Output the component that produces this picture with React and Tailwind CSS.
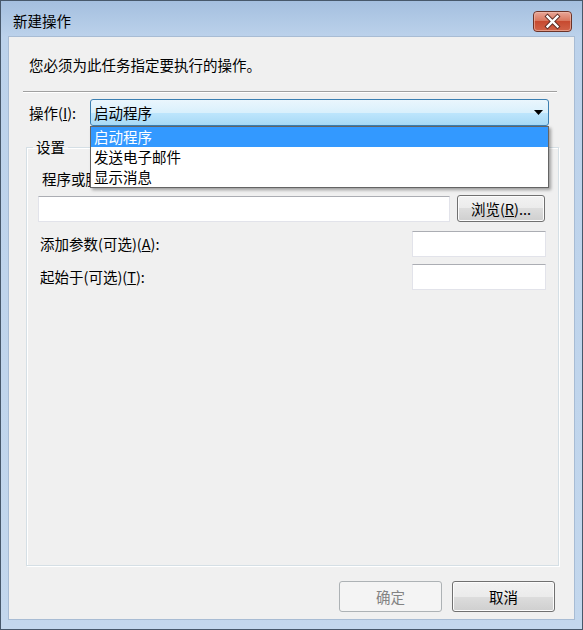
const font = "font-['Noto_Sans_CJK_SC','Noto_Sans',sans-serif]";

function CloseButton() {
  return (
    <svg width="39" height="21" viewBox="0 0 39 21" className="block">
      <defs>
        <linearGradient id="closeBg" x1="0" y1="0" x2="0" y2="1">
          <stop offset="0" stopColor="#e9a99b" />
          <stop offset="0.45" stopColor="#d9785f" />
          <stop offset="0.5" stopColor="#c74a30" />
          <stop offset="1" stopColor="#d2654a" />
        </linearGradient>
      </defs>
      <rect x="0.5" y="0.5" width="38" height="20" rx="3.5" fill="url(#closeBg)" stroke="#6b3328" />
      <rect x="1.5" y="1.5" width="36" height="18" rx="2.5" fill="none" stroke="#f0c0b0" strokeOpacity="0.6" />
      <path d="M14.5 5.5 L24.5 15.5 M24.5 5.5 L14.5 15.5" stroke="#5a2a22" strokeWidth="4.2" strokeLinecap="square" />
      <path d="M14.5 5.5 L24.5 15.5 M24.5 5.5 L14.5 15.5" stroke="#ffffff" strokeWidth="2.4" strokeLinecap="square" />
    </svg>
  );
}

function TextBox({ className = "" }) {
  return (
    <div
      className={`h-[26px] bg-white border border-[#e2e3ea] border-t-[#abadb3] ${className}`}
    />
  );
}

function Button({ children, disabled, className = "" }) {
  return (
    <button
      disabled={disabled}
      className={
        disabled
          ? `rounded-[3px] border border-[#adb2b5] bg-[#f4f4f4] text-[#838383] ${className}`
          : `rounded-[3px] border border-[#707070] bg-[linear-gradient(#f2f2f2_0%,#ebebeb_50%,#dddddd_50%,#cfcfcf_100%)] shadow-[inset_0_0_0_1px_#fcfcfc] text-black ${className}`
      }
    >
      {children}
    </button>
  );
}

export default function App() {
  return (
    <div
      className={`w-[583px] h-[630px] flex flex-col border border-[#47586b] bg-[linear-gradient(#a4bfdf_0px,#bcd2eb_36px,#c3d7ed_100%)] text-[14.5px] leading-[20px] text-black ${font}`}
    >
      {/* title bar */}
      <div className="h-[35px] flex items-start justify-between">
        <span className="ml-[12px] mt-[10px]">新建操作</span>
        <div className="mt-[10px] mr-[10px]">
          <CloseButton />
        </div>
      </div>

      {/* client area */}
      <div className="mx-[7px] mb-[9px] flex-1 flex flex-col bg-[#f0f0f0] border border-[#a8bcd4]">
        <p className="ml-[20px] mt-[18px]">您必须为此任务指定要执行的操作。</p>

        <div className="ml-[14px] mr-[17px] mt-[16px] border-t border-[#a0a0a0] border-b border-b-white" />

        <div className="flex items-center mt-[6px] ml-[20px] mr-[25px]">
          <span className="w-[61px]">
            操作(<u>I</u>):
          </span>
          <div className="relative flex-1">
            <div className="h-[27px] flex items-center justify-between pl-[3px] pr-[5px] rounded-[3px] border border-[#3c7fb1] bg-[linear-gradient(#eaf6fd_0%,#d9f0fc_50%,#bee6fd_50%,#a7d9f5_100%)]">
              <span>启动程序</span>
              <svg width="9" height="5" viewBox="0 0 9 5">
                <path d="M0 0 H9 L4.5 5 Z" fill="#000" />
              </svg>
            </div>
            {/* open dropdown list */}
            <ul className="absolute left-0 right-0 top-full z-10 bg-white border border-[#646464] shadow-[2px_2px_3px_rgba(0,0,0,0.35)]">
              <li className="h-[20px] pl-[3px] bg-[#3399ff] text-white">启动程序</li>
              <li className="h-[20px] pl-[3px]">发送电子邮件</li>
              <li className="h-[20px] pl-[3px]">显示消息</li>
            </ul>
          </div>
        </div>

        <fieldset className="flex-1 ml-[17px] mr-[15px] mt-[11px] border border-[#d5dfe5] shadow-[inset_1px_1px_0_#ffffff,1px_1px_0_#ffffff]">
          <legend className="ml-[6px] px-[3px]">设置</legend>

          <div className="pl-[11px] pr-[12px]">
            <div className="ml-[4px] mt-[12px]">
              程序或脚本(<u>P</u>):
            </div>
            <div className="flex items-center mt-[6px]">
              <TextBox className="w-[412px]" />
              <Button className="ml-[7px] w-[88px] h-[27px]">
                浏览(<u>R</u>)...
              </Button>
            </div>

            <div className="flex items-center justify-between mt-[9px]">
              <span className="ml-[2px]">
                添加参数(可选)(<u>A</u>):
              </span>
              <TextBox className="w-[134px]" />
            </div>
            <div className="flex items-center justify-between mt-[7px]">
              <span className="ml-[2px]">
                起始于(可选)(<u>T</u>):
              </span>
              <TextBox className="w-[134px]" />
            </div>
          </div>
        </fieldset>

        <div className="flex justify-end gap-[10px] mt-[15px] mb-[7px] mr-[19px]">
          <Button disabled className="w-[103px] h-[31px]">
            确定
          </Button>
          <Button className="w-[103px] h-[31px]">取消</Button>
        </div>
      </div>
    </div>
  );
}
